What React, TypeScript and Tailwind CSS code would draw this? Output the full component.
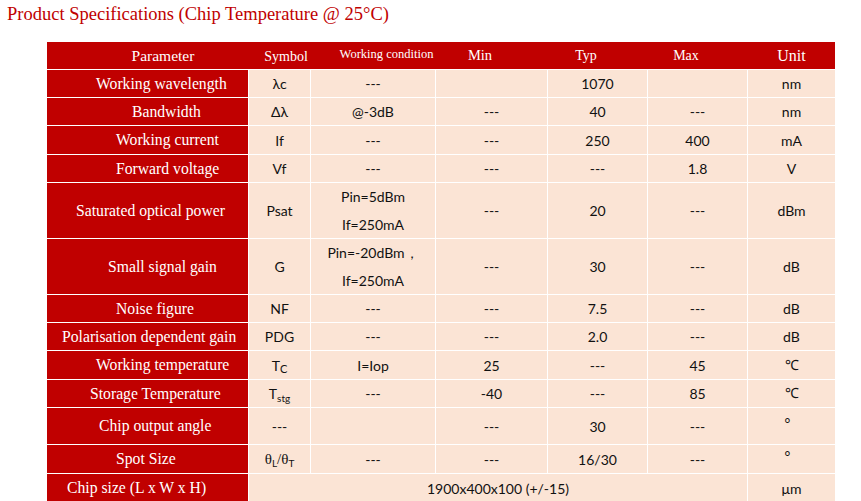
import React from 'react';

const serif = { fontFamily: '"Liberation Serif", "Times New Roman", serif' };

type Row = {
    name: string;
    pad: string;
    h: string;
    symbol: React.ReactNode;
    cond?: React.ReactNode;
    min?: string;
    typ?: string;
    max?: string;
    unit: React.ReactNode;
    merged?: string;
};

const rows: Row[] = [
    { name: 'Working wavelength', pad: 'pl-[49px]', h: 'h-[27px]', symbol: 'λc', cond: '---', min: '', typ: '1070', max: '', unit: 'nm' },
    { name: 'Bandwidth', pad: 'pl-[85px]', h: 'h-[27px]', symbol: 'Δλ', cond: '@-3dB', min: '---', typ: '40', max: '---', unit: 'nm' },
    { name: 'Working current', pad: 'pl-[69px]', h: 'h-[28px]', symbol: 'If', cond: '---', min: '---', typ: '250', max: '400', unit: 'mA' },
    { name: 'Forward voltage', pad: 'pl-[69px]', h: 'h-[27px]', symbol: 'Vf', cond: '---', min: '---', typ: '---', max: '1.8', unit: 'V' },
    {
        name: 'Saturated optical power',
        pad: 'pl-[29px]',
        h: 'h-[55px]',
        symbol: 'Psat',
        cond: (
            <div className="flex flex-col items-center leading-[28px]">
                <span>Pin=5dBm</span>
                <span>If=250mA</span>
            </div>
        ),
        min: '---',
        typ: '20',
        max: '---',
        unit: 'dBm',
    },
    {
        name: 'Small signal gain',
        pad: 'pl-[61px]',
        h: 'h-[55px]',
        symbol: 'G',
        cond: (
            <div className="flex flex-col items-center leading-[28px]">
                <span>Pin=-20dBm，</span>
                <span>If=250mA</span>
            </div>
        ),
        min: '---',
        typ: '30',
        max: '---',
        unit: 'dB',
    },
    { name: 'Noise figure', pad: 'pl-[69px]', h: 'h-[27px]', symbol: 'NF', cond: '---', min: '---', typ: '7.5', max: '---', unit: 'dB' },
    { name: 'Polarisation dependent gain', pad: 'pl-[15px]', h: 'h-[27px]', symbol: 'PDG', cond: '---', min: '---', typ: '2.0', max: '---', unit: 'dB' },
    {
        name: 'Working temperature',
        pad: 'pl-[49px]',
        h: 'h-[28px]',
        symbol: (
            <span>
                T<span className="text-[11px] relative top-[2px]">C</span>
            </span>
        ),
        cond: 'I=Iop',
        min: '25',
        typ: '---',
        max: '45',
        unit: <span style={serif}>℃</span>,
    },
    {
        name: 'Storage Temperature',
        pad: 'pl-[43px]',
        h: 'h-[27px]',
        symbol: (
            <span>
                T<span className="text-[10px] relative top-[3px]">stg</span>
            </span>
        ),
        cond: '---',
        min: '-40',
        typ: '---',
        max: '85',
        unit: <span style={serif}>℃</span>,
    },
    { name: 'Chip output angle', pad: 'pl-[52px]', h: 'h-[36px]', symbol: '---', cond: '', min: '---', typ: '30', max: '---', unit: <span className="relative -top-[4px] -left-[4px]">°</span> },
    {
        name: 'Spot Size',
        pad: 'pl-[69px]',
        h: 'h-[28px]',
        symbol: (
            <span style={serif} className="text-[15px]">
                θ<span className="text-[10px] relative top-[3px]" style={{ fontFamily: 'Lato, sans-serif' }}>L</span>/θ
                <span className="text-[10px] relative top-[3px]" style={{ fontFamily: 'Lato, sans-serif' }}>T</span>
            </span>
        ),
        cond: '---',
        min: '---',
        typ: '16/30',
        max: '---',
        unit: <span className="relative -top-[4px] -left-[4px]">°</span>,
    },
    { name: 'Chip size (L x W x H)', pad: 'pl-[20px]', h: 'h-[28px]', symbol: '', merged: '1900x400x100 (+/-15)', unit: 'μm' },
];

function Cell({ children, className = '' }: { children?: React.ReactNode; className?: string }) {
    return <div className={`flex items-center justify-center bg-[#fbe4d5] ${className}`}>{children}</div>;
}

export default function App() {
    return (
        <main className="w-[861px] h-[501px] overflow-hidden bg-white">
            <h1 className="pl-[7px] pt-[2px] h-[26px] leading-[24px] text-[18.5px] text-[#c00000]" style={serif}>
                Product Specifications (Chip Temperature @ 25°C)
            </h1>

            <div className="ml-[47px] mt-[16px] w-[788px]">
                {/* header row, labels sit a little off-centre like the source doc */}
                <div
                    className="grid grid-cols-[202px_62px_125px_112px_100px_100px_87px] h-[27px] bg-[#c00000] text-white"
                    style={serif}
                >
                    <div className="flex items-center justify-center text-[15.5px] pt-[1px] pl-[30px]">Parameter</div>
                    <div className="flex items-center justify-center text-[14px] pt-[1px] pl-[12px]">Symbol</div>
                    <div className="flex items-center justify-center text-[12.5px] -mt-[3px] pl-[26px]">Working condition</div>
                    <div className="flex items-center justify-center text-[14.5px] pr-[24px]">Min</div>
                    <div className="flex items-center justify-center text-[14px] pr-[24px]">Typ</div>
                    <div className="flex items-center justify-center text-[14px] pr-[24px]">Max</div>
                    <div className="flex items-center justify-center text-[16px] pt-[1px]">Unit</div>
                </div>

                {/* body */}
                <div
                    className="grid grid-cols-[201px_61px_124px_111px_99px_99px_87px] gap-px bg-white pt-px text-[14px] text-[#111]"
                    style={{ fontFamily: 'Lato, "Liberation Sans", sans-serif' }}
                >
                    {rows.map((r) => (
                        <React.Fragment key={r.name}>
                            <div
                                className={`flex items-center bg-[#c00000] text-white text-[15.7px] ${r.h} ${r.pad}`}
                                style={serif}
                            >
                                {r.name}
                            </div>
                            {r.merged ? (
                                <Cell className={`col-span-5 ${r.h}`}>{r.merged}</Cell>
                            ) : (
                                <>
                                    <Cell className={r.h}>{r.symbol}</Cell>
                                    <Cell className={r.h}>{r.cond}</Cell>
                                    <Cell className={r.h}>{r.min}</Cell>
                                    <Cell className={r.h}>{r.typ}</Cell>
                                    <Cell className={r.h}>{r.max}</Cell>
                                </>
                            )}
                            <Cell className={r.h}>{r.unit}</Cell>
                        </React.Fragment>
                    ))}
                </div>
            </div>
        </main>
    );
}
